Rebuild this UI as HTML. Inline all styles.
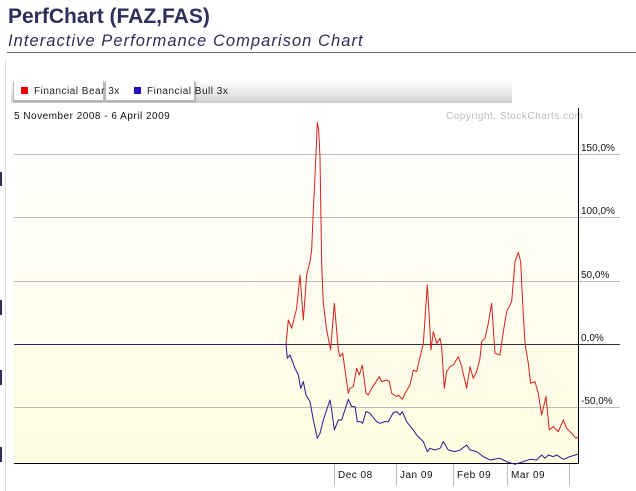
<!DOCTYPE html>
<html><head><meta charset="utf-8"><style>
body{margin:0;width:636px;height:491px;background:#fff;position:relative;overflow:hidden;font-family:"Liberation Sans",sans-serif}
.t{position:absolute;white-space:nowrap}
.s{letter-spacing:0.5px}
</style></head><body>
<div class="t" style="left:8px;top:5px;font-size:21px;font-weight:bold;color:#2e2e58">PerfChart (FAZ,FAS)</div>
<div class="t" style="left:8px;top:32px;font-size:16.5px;font-style:italic;color:#2e2e58;letter-spacing:1.05px">Interactive Performance Comparison Chart</div>
<div style="position:absolute;left:7px;top:52px;width:629px;height:1px;background:#6a6a7a"></div>
<div style="position:absolute;left:5px;top:60px;width:1px;height:431px;background:#ddd"></div>
<div style="position:absolute;left:0;top:172px;width:2px;height:14px;background:#2e2e58"></div>
<div style="position:absolute;left:0;top:300px;width:2px;height:15px;background:#2e2e58"></div>
<div style="position:absolute;left:0;top:370px;width:2px;height:15px;background:#2e2e58"></div>
<div style="position:absolute;left:0;top:447px;width:2px;height:15px;background:#2e2e58"></div>
<div style="position:absolute;left:11px;top:81px;width:501px;height:22px;background:linear-gradient(#fff,#ddd 80%,#ccc)"></div>
<div style="position:absolute;left:13px;top:81px;width:89px;height:19px;background:#fff;border:1px solid #bbb;border-top:none;box-shadow:1px 1px 1px #aaa"></div>
<div style="position:absolute;left:105px;top:81px;width:88px;height:19px;background:#fff;border:1px solid #bbb;border-top:none;box-shadow:1px 1px 1px #aaa"></div>
<div style="position:absolute;left:21px;top:87px;width:7px;height:7px;background:#e00"></div>
<div style="position:absolute;left:134px;top:87px;width:7px;height:7px;background:#2010c0"></div>
<div class="t s" style="left:34px;top:86px;font-size:10px;color:#222">Financial Bear 3x</div>
<div class="t s" style="left:147px;top:86px;font-size:10px;color:#222">Financial Bull 3x</div>
<div class="t s" style="left:14px;top:111px;font-size:10px;color:#111">5 November 2008 - 6 April 2009</div>
<div class="t s" style="left:446px;top:111px;font-size:10px;color:#bbb">Copyright, StockCharts.com</div>
<div style="position:absolute;left:14px;top:125px;width:564px;height:338px;background:linear-gradient(#fff,#fffef8 20%,#fffce0 100%)"></div>
<svg style="position:absolute;left:0;top:0" width="636" height="491">
<g stroke="#bbb" stroke-width="1">
<line x1="14" y1="154.5" x2="620" y2="154.5"/><line x1="14" y1="217.5" x2="620" y2="217.5"/>
<line x1="14" y1="281.5" x2="620" y2="281.5"/><line x1="14" y1="407.5" x2="620" y2="407.5"/>
<line x1="334.5" y1="464" x2="334.5" y2="486"/><line x1="396.5" y1="464" x2="396.5" y2="486"/>
<line x1="453.5" y1="464" x2="453.5" y2="486"/><line x1="507.5" y1="464" x2="507.5" y2="486"/>
<line x1="569.5" y1="464" x2="569.5" y2="486"/>
</g>
<line x1="286" y1="344.5" x2="620" y2="344.5" stroke="#333"/>
<line x1="14" y1="344.5" x2="286" y2="344.5" stroke="#2a1a80"/>
<line x1="578.5" y1="108" x2="578.5" y2="464" stroke="#000"/>
<line x1="14" y1="463.5" x2="579" y2="463.5" stroke="#000"/>
<g transform="translate(270,110) scale(0.3333)" fill="none" stroke-width="3" stroke-linejoin="round">
<polyline stroke="#d42020" points="48,703 55,630 65,655 80,595 90,495 100,630 110,495 120,455 125,420 130,300 135,200 142,38 146,60 150,140 155,460 160,580 170,660 182,720 193,580 205,720 210,740 218,730 235,850 240,835 250,830 260,775 268,795 277,765 288,850 295,855 305,835 315,820 328,800 335,815 350,810 358,815 365,850 380,860 385,855 397,868 405,850 420,825 430,780 440,785 460,700 472,525 480,660 483,720 490,665 500,700 510,685 515,710 523,835 530,785 540,770 550,765 565,740 575,770 590,835 600,770 610,805 620,785 630,745 635,695 645,685 655,640 665,580 675,730 690,735 700,665 710,605 725,575 735,455 745,428 752,455 760,615 765,700 775,760 782,820 795,815 805,850 815,915 828,860 838,960 850,950 865,965 880,930 890,955 905,970 918,985 925,980"/>
<polyline stroke="#2a1a90" points="48,703 52,745 60,735 75,775 85,795 92,835 100,815 108,855 120,875 130,930 142,985 150,970 160,930 180,870 185,900 193,960 205,930 215,930 235,868 245,890 255,890 262,935 272,935 278,940 288,905 300,910 320,935 330,940 345,935 355,935 370,908 380,905 390,915 397,905 410,935 430,960 440,975 460,995 472,1025 480,1015 495,1020 510,1015 520,995 535,1020 555,1025 570,1020 590,1005 600,1020 620,1025 640,1040 660,1050 690,1045 710,1055 735,1063 760,1055 780,1048 800,1050 815,1035 825,1045 835,1035 850,1040 860,1035 880,1048 900,1040 925,1032"/>
</g>
</svg>
<div class="t" style="left:581px;top:143px;font-size:10px;color:#111">150,0%</div>
<div class="t" style="left:581px;top:206px;font-size:10px;color:#111">100,0%</div>
<div class="t" style="left:581px;top:270px;font-size:10px;color:#111">50,0%</div>
<div class="t" style="left:581px;top:333px;font-size:10px;color:#111">0,0%</div>
<div class="t" style="left:581px;top:396px;font-size:10px;color:#111">-50,0%</div>
<div class="t s" style="left:338px;top:470px;font-size:10px;color:#111">Dec 08</div>
<div class="t s" style="left:400px;top:470px;font-size:10px;color:#111">Jan 09</div>
<div class="t s" style="left:457px;top:470px;font-size:10px;color:#111">Feb 09</div>
<div class="t s" style="left:511px;top:470px;font-size:10px;color:#111">Mar 09</div>
</body></html>
